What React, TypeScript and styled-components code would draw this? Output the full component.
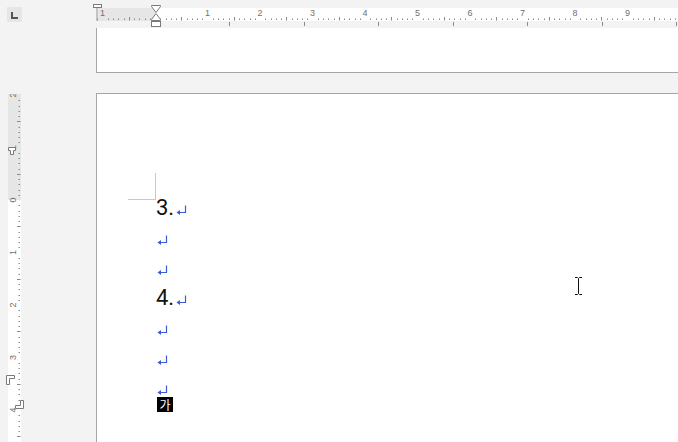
import * as React from 'react'
import styled, { createGlobalStyle } from 'styled-components'

const GlobalStyle = createGlobalStyle`
  html, body {
    margin: 0;
    padding: 0;
    background: #f3f3f3;
  }
`

const Window = styled.div`
  width: 678px;
  height: 442px;
  overflow: hidden;
  background: #f3f3f3;
  display: flex;
  flex-direction: column;
  font-family: 'Liberation Sans', Arial, sans-serif;
`

const TopBar = styled.div`
  display: flex;
  height: 28px;
  flex: none;
`

const CornerCell = styled.div`
  width: 88px;
  flex: none;
  padding: 7px 0 0 7px;
  box-sizing: border-box;
`

const TabSelector = styled.div`
  width: 15px;
  height: 15px;
  background: #e6e6e6;
  position: relative;
`

const TabGlyph = styled.svg`
  display: block;
`

const Body = styled.div`
  flex: 1;
  display: flex;
  min-height: 0;
`

const LeftColumn = styled.div`
  width: 96px;
  flex: none;
  padding-top: 66px;
  box-sizing: border-box;
`

const PagesColumn = styled.div`
  flex: 1;
  display: flex;
  flex-direction: column;
`

const PageTail = styled.div`
  height: 45px;
  box-sizing: border-box;
  background: #fff;
  border-left: 1px solid #a6a6a6;
  border-bottom: 1px solid #a6a6a6;
  flex: none;
`

const Page = styled.div`
  position: relative;
  flex: 1;
  margin-top: 20px;
  background: #fff;
  border-left: 1px solid #a6a6a6;
  border-top: 1px solid #a6a6a6;
  padding: 99px 0 0 59px;
`

const CropMark = styled.div`
  position: absolute;
  left: 31px;
  top: 79px;
  width: 27px;
  height: 26px;
  border-right: 1px solid #c8c8c8;
  border-bottom: 1px solid #c8c8c8;
`

const Paragraph = styled.p`
  margin: 0;
  height: 30px;
  line-height: 30px;
  font-size: 22px;
  font-family: 'Liberation Sans Narrow', 'Roboto', sans-serif;
  color: #111;
  white-space: nowrap;
`

const MarkSvg = styled.svg<{ $gap: number }>`
  margin-left: ${(p) => p.$gap}px;
  vertical-align: baseline;
`

const Composition = styled.div`
  margin: -6px 0 0 1px;
  width: 16px;
  height: 15px;
  background: #000;
  color: #fff;
  font-family: 'Noto Sans CJK KR', sans-serif;
  font-size: 12px;
  line-height: 15px;
  text-align: center;
`

const IBeam = styled.svg`
  position: absolute;
  left: 477px;
  top: 183px;
`

const UNIT = 52.5
const STEP = UNIT / 10

function ParaMark({ gap }: { gap: number }) {
  return (
    <MarkSvg $gap={gap} width="11" height="10" viewBox="0 0 11 10">
      <path d="M9.5 0.5 V7.5 H3" fill="none" stroke="#3a5bd6" strokeWidth="1.2" />
      <path d="M0.5 7.5 L4 5 L4 10 Z" fill="#3a5bd6" />
    </MarkSvg>
  )
}

function HRuler() {
  // svg starts at page x=88; page edge at 8, zero at 67
  const zero = 67
  const ticks: JSX.Element[] = []
  for (let i = -11; i <= 100; i++) {
    const x = zero + i * STEP
    if (x < 9 || x > 590) continue
    if (i % 10 === 0) continue
    const half = Math.abs(i % 10) === 5
    ticks.push(
      <rect key={'t' + i} x={Math.round(x)} y={half ? 17 : 18.5} width="1" height={half ? 3.5 : 1.5} fill="#8a8a8a" />
    )
  }
  const labels: JSX.Element[] = []
  for (let k = -1; k <= 10; k++) {
    if (k === 0) continue
    const x = zero + k * UNIT
    if (x > 590) continue
    labels.push(
      <text key={'l' + k} x={x} y={16} fontSize="9" fill="#6f6f6f" textAnchor="middle" fontFamily="'Liberation Sans', Arial, sans-serif">
        {Math.abs(k)}
      </text>
    )
  }
  const tabs: JSX.Element[] = []
  for (let n = 0; n < 8; n++) {
    const x = 141 + n * 74.5
    if (x > 590) continue
    tabs.push(<rect key={'tab' + n} x={Math.round(x)} y="22" width="1" height="4" fill="#8a8a8a" />)
  }
  return (
    <svg width="590" height="28" viewBox="0 0 590 28" style={{ display: 'block' }}>
      <rect x="8" y="8" width="582" height="13" fill="#fff" />
      <rect x="8" y="8" width="59" height="13" fill="#e6e6e6" />
      <rect x="8" y="8" width="2" height="13" fill="#c4c4c4" />
      {ticks}
      {labels}
      {tabs}
      {/* left margin marker */}
      <rect x="5.5" y="4.5" width="8" height="3" fill="#fff" stroke="#7a7a7a" />
      {/* indent markers */}
      <path d="M63.5 5.5 H72.5 V6.5 L68 12.5 L63.5 6.5 Z" fill="#fff" stroke="#7a7a7a" />
      <path d="M68 13.5 L72.5 19.5 V20.5 H63.5 V19.5 Z" fill="#fff" stroke="#7a7a7a" />
      <rect x="63.5" y="21.5" width="9" height="5" fill="#fff" stroke="#7a7a7a" />
    </svg>
  )
}

function VRuler() {
  // svg starts at page y=94; zero at 106
  const zero = 106
  const h = 348
  const ticks: JSX.Element[] = []
  for (let i = -21; i <= 50; i++) {
    const y = zero + i * STEP
    if (y < 0 || y > h) continue
    if (i % 10 === 0) continue
    const half = Math.abs(i % 10) === 5
    ticks.push(
      <rect key={'t' + i} x={half ? 17 : 18.5} y={Math.round(y)} width={half ? 3.5 : 1.5} height="1" fill="#8a8a8a" />
    )
  }
  const labels: JSX.Element[] = []
  for (let k = -2; k <= 5; k++) {
    const y = zero + k * UNIT
    if (y > h + 5) continue
    labels.push(
      <text
        key={'l' + k}
        x={0}
        y={0}
        fontSize="9"
        fill="#6f6f6f"
        textAnchor="middle"
        fontFamily="'Liberation Sans', Arial, sans-serif"
        transform={`translate(16 ${y}) rotate(-90)`}
      >
        {Math.abs(k)}
      </text>
    )
  }
  return (
    <svg width="30" height={h} viewBox={`0 0 30 ${h}`} style={{ display: 'block' }}>
      <rect x="8" y="0" width="13" height={h} fill="#fff" />
      <rect x="8" y="0" width="13" height={zero} fill="#e6e6e6" />
      {ticks}
      {labels}
      {/* top margin marker */}
      <path d="M8.5 53.5 H15.5 V56.5 H13.5 V60.5 H10.5 V56.5 H8.5 Z" fill="#fff" stroke="#7a7a7a" />
      {/* corner markers */}
      <path d="M6.5 281.5 H14.5 V284.5 H9.5 V290.5 H6.5 Z" fill="#fff" stroke="#7a7a7a" />
      <path d="M23.5 306.5 V314.5 H15.5 V311.5 H20.5 V306.5 Z" fill="#fff" stroke="#7a7a7a" />
    </svg>
  )
}

export default function App(): JSX.Element {
  return (
    <Window>
      <GlobalStyle />
      <TopBar>
        <CornerCell>
          <TabSelector>
            <TabGlyph width="15" height="15" viewBox="0 0 15 15">
              <path d="M5 5 V11 H11" fill="none" stroke="#555" strokeWidth="2" />
            </TabGlyph>
          </TabSelector>
        </CornerCell>
        <HRuler />
      </TopBar>
      <Body>
        <LeftColumn>
          <VRuler />
        </LeftColumn>
        <PagesColumn>
          <PageTail />
          <Page>
            <CropMark />
            <Paragraph>
              3.
              <ParaMark gap={2} />
            </Paragraph>
            <Paragraph>
              <ParaMark gap={1} />
            </Paragraph>
            <Paragraph>
              <ParaMark gap={1} />
            </Paragraph>
            <Paragraph>
              4.
              <ParaMark gap={2} />
            </Paragraph>
            <Paragraph>
              <ParaMark gap={1} />
            </Paragraph>
            <Paragraph>
              <ParaMark gap={1} />
            </Paragraph>
            <Paragraph>
              <ParaMark gap={1} />
            </Paragraph>
            <Composition>가</Composition>
            <IBeam width="9" height="18" viewBox="0 0 9 18">
              <path d="M1 0.5 H3.5 L4.5 1.5 L5.5 0.5 H8 M4.5 1.5 V16.5 M1 17.5 H3.5 L4.5 16.5 L5.5 17.5 H8" fill="none" stroke="#111" strokeWidth="1" />
            </IBeam>
          </Page>
        </PagesColumn>
      </Body>
    </Window>
  )
}
